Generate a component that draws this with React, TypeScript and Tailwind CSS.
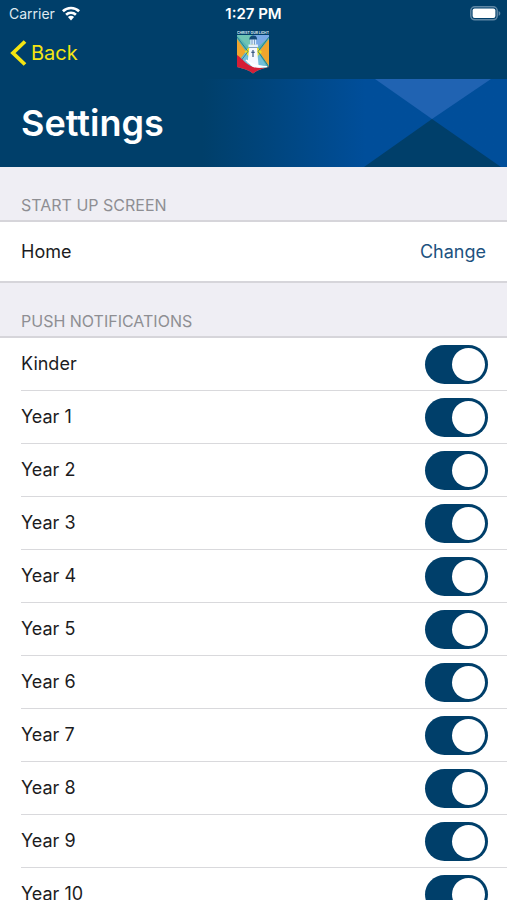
import { useState } from "react";

const GROUPS = [
  "Kinder",
  "Year 1",
  "Year 2",
  "Year 3",
  "Year 4",
  "Year 5",
  "Year 6",
  "Year 7",
  "Year 8",
  "Year 9",
  "Year 10",
];

function WifiIcon() {
  return (
    <svg viewBox="0 0 20 15" className="h-[15px] w-5" fill="none" stroke="white" strokeWidth="2.6" aria-hidden="true">
      <path d="M1.9 5.3a11.6 11.6 0 0 1 16.2 0" />
      <path d="M5.1 8.7a7 7 0 0 1 9.8 0" />
      <path d="M10 14.4 6.9 11.1a4.5 4.5 0 0 1 6.2 0Z" fill="white" stroke="none" />
    </svg>
  );
}

function BatteryIcon() {
  return (
    <svg viewBox="0 0 31 15" className="h-[15px] w-[31px]" aria-hidden="true">
      <rect x="0.8" y="0.8" width="26.4" height="13" rx="4" fill="none" stroke="#5f87a5" strokeWidth="1.5" />
      <rect x="2.6" y="2.6" width="22.8" height="9.4" rx="2" fill="white" />
      <path d="M28.6 5v4.8c1-.4 1.7-1.3 1.7-2.4S29.6 5.4 28.6 5Z" fill="#5f87a5" />
    </svg>
  );
}

function Crest() {
  return (
    <svg viewBox="0 0 32 44" className="h-11 w-8" role="img" aria-label="School crest">
      <defs>
        <clipPath id="shield">
          <path d="M0 5H32V37C26 38.5 20 40 16 43.5 12 40 6 38.5 0 37Z" />
        </clipPath>
      </defs>
      <text x="16" y="3.6" textAnchor="middle" fontSize="3.4" fontWeight="700" fill="#dbe9f2" fontFamily="Inter, sans-serif">
        CHRIST OUR LIGHT
      </text>
      <g clipPath="url(#shield)">
        <rect y="5" width="32" height="39" fill="#58b7b2" />
        <path d="M0 5H16V22Z" fill="#6fc4b4" />
        <path d="M16 5H32V7L16 22Z" fill="#78a9e6" />
        <path d="M0 9 9 21.5 0 33Z" fill="#f0a52d" />
        <path d="M32 9 22 21.5 32 36Z" fill="#f0a52d" />
        <path d="M16 13 7.5 22 16 31 25 22Z" fill="#e9df24" />
        <path d="M9 22 1 33 15 38Z" fill="#72bfd9" />
        <path d="M22 24 30 37 17 39Z" fill="#72bfd9" />
        <path d="M0 7 11 21.5 0 36M32 7 21 21.5 32 37" fill="none" stroke="#17637e" strokeWidth="0.7" />
        <path d="M12.5 16H19.8L21.6 36 10.5 33Z" fill="#f5f8ff" />
        <rect x="11.5" y="14.5" width="9.4" height="2.6" fill="#e6f0fc" />
        <rect x="13.3" y="9" width="5.8" height="5.5" fill="#d9eaff" />
        <path d="M12.2 9.5C12.6 6.5 14 5.5 16.2 5.5S19.8 6.5 20.2 9.5Z" fill="#144a78" />
        <path d="M15 9V14.5M17.5 9V14.5M12 17.5H20.3" stroke="#4d7ba8" strokeWidth="0.7" />
        <path d="M16 20V27M14.2 22.2H17.8" stroke="#254775" strokeWidth="1.1" />
        <path d="M9 30C14 31 19 36 30 36.5L17 39Z" fill="#f6fbff" />
        <path d="M0 25C5 28 8 34 16 37 22 39 28 38 32 36.5V44H0Z" fill="#d51e36" />
        <path d="M9 30C14 35 20 37 30 36.7" fill="none" stroke="white" strokeWidth="1.5" />
      </g>
    </svg>
  );
}

function SectionTitle({ id, children }: { id: string; children: string }) {
  return (
    <h2 id={id} className="border-b-2 border-[#d6d5da] px-[21px] pt-7 pb-1 text-base leading-[21px] font-normal text-[#8e8e93]">
      {children}
    </h2>
  );
}

function ToggleRow({ label }: { label: string }) {
  const [enabled, setEnabled] = useState(true);
  return (
    <li className="ml-[21px] border-b border-[#d9d9dc]">
      <label className="flex h-[52px] cursor-pointer items-center justify-between pr-[19px]">
        <span>{label}</span>
        <input
          type="checkbox"
          role="switch"
          checked={enabled}
          onChange={(event) => setEnabled(event.target.checked)}
          className="h-[39px] w-[63px] shrink-0 cursor-pointer appearance-none rounded-full bg-[#c7c7cc] p-[3px] before:block before:size-[33px] before:rounded-full before:bg-white checked:bg-[#003f6a] checked:before:ml-auto"
        />
      </label>
    </li>
  );
}

export default function App() {
  return (
    <div className="flex h-screen flex-col overflow-hidden bg-[#efeef4] font-[Inter,'Liberation_Sans',sans-serif] text-lg text-[#1c1c1e]">
      <header className="shrink-0 bg-[#003f6a] text-white">
        <div className="grid h-[27px] grid-cols-3 items-center px-[9px] text-sm">
          <div className="flex items-center gap-1.5 text-[#dfe9f0]">
            <span>Carrier</span>
            <WifiIcon />
          </div>
          <time className="text-center text-[15px] font-semibold">1:27 PM</time>
          <div className="-mr-[3px] flex justify-end">
            <BatteryIcon />
          </div>
        </div>
        <nav className="grid h-[52px] grid-cols-3 items-center px-2.5">
          <button type="button" className="flex cursor-pointer items-center gap-1 justify-self-start text-xl text-[#f4e512]">
            <svg viewBox="0 0 17 26" className="h-[26px] w-[17px]" fill="none" stroke="currentColor" strokeWidth="3.8" aria-hidden="true">
              <path d="M15 1.5 3 13 15 24.5" />
            </svg>
            Back
          </button>
          <div className="justify-self-center pb-0.5">
            <Crest />
          </div>
        </nav>
        <div className="flex h-[88px] items-center justify-between bg-linear-to-r from-[#003f6a] from-40% to-[#004e9a] to-72% pl-[21px]">
          <h1 className="text-4xl font-semibold">Settings</h1>
          <svg viewBox="0 0 145 88" className="h-[88px] w-[145px]" aria-hidden="true">
            <path d="M13 0H129L70 40Z" fill="#2063b2" />
            <path d="M2 88 70 40 139 88Z" fill="#003f6a" />
          </svg>
        </div>
      </header>
      <main className="min-h-0 flex-1 overflow-y-auto [scrollbar-width:none]">
        <section aria-labelledby="startup">
          <SectionTitle id="startup">START UP SCREEN</SectionTitle>
          <div className="flex h-[61px] items-center justify-between border-b-2 border-[#d6d5da] bg-white px-[21px]">
            <span>Home</span>
            <button type="button" className="cursor-pointer text-[#1d5280]">
              Change
            </button>
          </div>
        </section>
        <section aria-labelledby="notifications">
          <SectionTitle id="notifications">PUSH NOTIFICATIONS</SectionTitle>
          <ul className="bg-white">
            {GROUPS.map((group) => (
              <ToggleRow key={group} label={group} />
            ))}
          </ul>
        </section>
      </main>
    </div>
  );
}
